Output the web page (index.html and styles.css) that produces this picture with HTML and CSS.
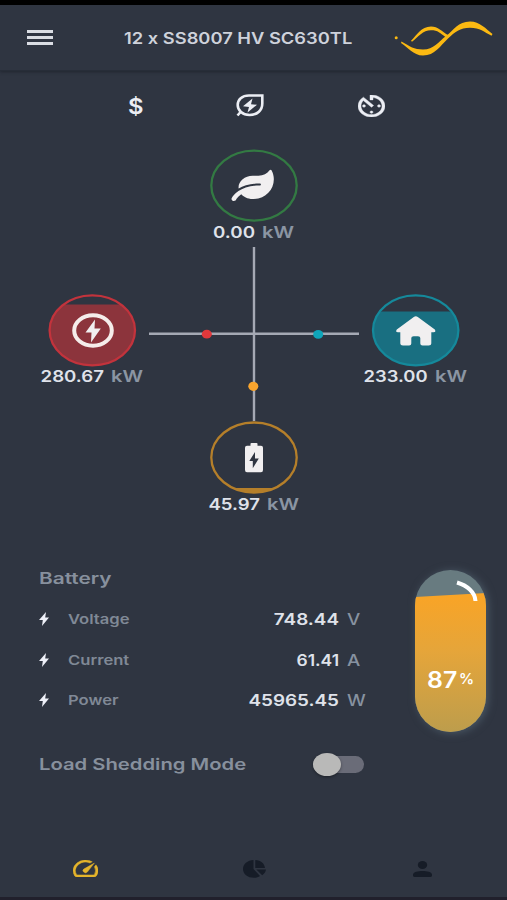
FILE: index.html
```html
<!DOCTYPE html>
<html lang="en">
<head>
  <meta charset="UTF-8">
  <meta name="viewport" content="width=device-width, initial-scale=1.0">
  <title>Inverter Dashboard</title>
  <link rel="stylesheet" href="styles.css">
</head>
<body>

  <!-- Header -->
  <header class="header">
    <button class="menu" aria-label="Menu"><span></span><span></span><span></span></button>
    <h1 class="title"><span>12 x SS8007 HV SC630TL</span></h1>
    <svg class="logo" viewBox="394 18 100 38">
      <circle cx="396.2" cy="36.8" r="1.5"/>
      <path d="M401.5 40.500C410 45.500 414 48.500 423 48.500C434 48.500 438 41 446 35C454 29 458 20.500 470 20.500C480 20.500 486 28 492.500 33L491.500 34.800C484 31 480 26.800 470 26.800C460 26.800 455 31 448 37.500C440 45 435 54.500 423 54.500C413 54.500 408 46 401 42Z"/>
      <path d="M411 39.700C417 34 421 25.500 431 25.500C438 25.500 442 30.500 448 34L446 36.500C440 32 438 29.300 431 29.300C423 29.300 418 36 412 40.800Z"/>
    </svg>
  </header>

  <!-- Tab icons -->
  <nav class="tabs">
    <svg class="tab-dollar" viewBox="0 0 17 24"><text x="1" y="19.600" textLength="15.500" lengthAdjust="spacingAndGlyphs">$</text></svg>
    <svg class="tab-eco" viewBox="0 0 28 23">
      <path class="line" d="M26.300 1.500H13C6 1.500 1.700 5.500 1.700 11C1.700 16.500 6.500 21 13.500 21C21.500 21 26.300 16 26.300 9.500ZM5 17.500L1.500 21.500"/>
      <path d="M16.500 4.500L7 12.300L13 13L11.500 18.500L21 10.800L15 10.200Z"/>
    </svg>
    <svg class="tab-timer" viewBox="3 3 18 18" preserveAspectRatio="none">
      <path d="M11 17c0 .55.45 1 1 1s1-.45 1-1-.45-1-1-1-1 .45-1 1zm0-14v4h2V5.080c3.390.49 6 3.390 6 6.920 0 3.870-3.130 7-7 7s-7-3.130-7-7c0-1.680.59-3.220 1.580-4.420L12 13l1.410-1.410-6.800-6.800v.02C4.420 6.450 3 9.050 3 12c0 4.970 4.020 9 9 9 4.970 0 9-4.030 9-9s-4.030-9-9-9h-1zm7 9c0-.55-.45-1-1-1s-1 .45-1 1 .45 1 1 1 1-.45 1-1zM6 12c0 .55.45 1 1 1s1-.45 1-1-.45-1-1-1-1 .45-1 1z"/>
    </svg>
  </nav>

  <!-- Power flow diagram -->
  <svg class="flow" viewBox="0 140 507 380">
    <defs>
      <clipPath id="grid-level"><rect x="40" y="304.500" width="110" height="70"/></clipPath>
      <clipPath id="home-level"><rect x="365" y="311.500" width="110" height="70"/></clipPath>
      <clipPath id="batt-level"><rect x="200" y="488" width="110" height="10"/></clipPath>
    </defs>

    <path class="wire" d="M254 247V421M149 333.800H359"/>
    <ellipse class="dot-red" cx="206.800" cy="334.200" rx="5" ry="4.400"/>
    <ellipse class="dot-teal" cx="318.200" cy="334.400" rx="5" ry="4.400"/>
    <ellipse class="dot-orange" cx="253.300" cy="386.300" rx="5" ry="4.600"/>

    <!-- Solar -->
    <ellipse class="ring green" cx="254" cy="185.600" rx="42.700" ry="35"/>
    <path class="icon" transform="translate(231.500 169.800) scale(.0735 .0610)" d="M546.200 9.700c-5.600-12.500-21.600-13-28.300-1.200C486.900 62.400 431.400 96 368 96h-80C182 96 96 182 96 288c0 7 .8 13.700 1.500 20.500C161.300 262.800 253.400 224 384 224c8.800 0 16 7.200 16 16s-7.200 16-16 16C132.600 256 26 410.100 2.400 468c-6.600 16.300 1.200 34.900 17.500 41.600 16.400 6.800 35-1.100 41.800-17.300 1.500-3.600 20.900-47.900 71.900-90.600 32.400 43.900 94 85.800 174.900 77.200C465.500 467.500 576 326.700 576 154.300c0-50.200-10.800-102.200-29.800-144.600z"/>
    <text class="num" x="213" y="237.800" textLength="42" lengthAdjust="spacingAndGlyphs">0.00</text>
    <text class="unit" x="262" y="237.800" textLength="32" lengthAdjust="spacingAndGlyphs">kW</text>

    <!-- Grid -->
    <ellipse class="fill-red" cx="92.300" cy="330.300" rx="42.700" ry="35" clip-path="url(#grid-level)"/>
    <ellipse class="ring red" cx="92.300" cy="330.300" rx="42.700" ry="35"/>
    <ellipse class="plug-ring" cx="93" cy="330.500" rx="18.800" ry="15.300"/>
    <path class="icon" d="M95 319.500L85.500 332.500H91.500L91 342.500L100.800 328.500H94.500Z"/>
    <text class="num" x="40.500" y="382.400" textLength="63.500" lengthAdjust="spacingAndGlyphs">280.67</text>
    <text class="unit" x="111" y="382.400" textLength="32" lengthAdjust="spacingAndGlyphs">kW</text>

    <!-- Home -->
    <ellipse class="fill-teal" cx="415.700" cy="330.300" rx="42.700" ry="35" clip-path="url(#home-level)"/>
    <ellipse class="ring teal" cx="415.700" cy="330.300" rx="42.700" ry="35"/>
    <path class="icon" d="M413.800 316.900Q415.800 315.400 417.800 316.900L434.800 329.500Q436.500 332.300 433.500 332.300H431.300V343.500Q431.300 345.600 428.700 345.600H422.500Q420.300 345.600 420.300 343.500V338Q420.300 336.200 418 336.200H413.600Q411.300 336.200 411.300 338V343.500Q411.300 345.600 409.100 345.600H402.900Q400.300 345.600 400.300 343.500V332.300H398Q395 332.300 396.800 329.500Z"/>
    <text class="num" x="363.500" y="382.400" textLength="64" lengthAdjust="spacingAndGlyphs">233.00</text>
    <text class="unit" x="435" y="382.400" textLength="32" lengthAdjust="spacingAndGlyphs">kW</text>

    <!-- Battery -->
    <ellipse class="fill-orange" cx="254" cy="457.500" rx="42.700" ry="35" clip-path="url(#batt-level)"/>
    <ellipse class="ring orange" cx="254" cy="457.500" rx="42.700" ry="35"/>
    <path class="icon" fill-rule="evenodd" d="M250.500 445.800V443.800Q250.500 443 251.500 443H256.500Q257.500 443 257.500 443.800V445.800H261Q263 445.800 263 447.800V470Q263 472.200 261 472.200H247Q245 472.200 245 470V447.800Q245 445.800 247 445.800ZM255 452L249.300 461H252.800V468.200L258.800 458.600H255Z"/>
    <text class="num" x="208.500" y="509.800" textLength="51.500" lengthAdjust="spacingAndGlyphs">45.97</text>
    <text class="unit" x="267" y="509.800" textLength="32" lengthAdjust="spacingAndGlyphs">kW</text>
  </svg>

  <!-- Battery details -->
  <section class="battery">
    <div class="details">
      <h2 class="heading"><span>Battery</span></h2>
      <div class="row">
        <svg class="bolt" viewBox="0 0 10 14"><path d="M7 0L0 8H3.800L3 14L10 5.500H6.200Z"/></svg>
        <span class="label">Voltage</span>
        <span class="value">748.44</span>
        <span class="suffix">V</span>
      </div>
      <div class="row">
        <svg class="bolt" viewBox="0 0 10 14"><path d="M7 0L0 8H3.800L3 14L10 5.500H6.200Z"/></svg>
        <span class="label">Current</span>
        <span class="value amps">61.41</span>
        <span class="suffix">A</span>
      </div>
      <div class="row">
        <svg class="bolt" viewBox="0 0 10 14"><path d="M7 0L0 8H3.800L3 14L10 5.500H6.200Z"/></svg>
        <span class="label">Power</span>
        <span class="value">45965.45</span>
        <span class="suffix">W</span>
      </div>
      <div class="mode">
        <h2 class="heading"><span>Load Shedding Mode</span></h2>
        <div class="switch"><div class="thumb"></div></div>
      </div>
    </div>

    <div class="tank">
      <div class="charge"></div>
      <svg class="shine" viewBox="0 0 24 24"><path d="M2 2.500C12 5.500 20 12 20.500 21"/></svg>
      <div class="percent"><span class="pct-num">87</span><span class="pct-sign">%</span></div>
    </div>
  </section>

  <!-- Bottom navigation -->
  <nav class="bottom">
    <svg class="nav-speed" viewBox="2 4 20 16" preserveAspectRatio="none">
      <path d="M20.380 8.570l-1.230 1.850a8 8 0 0 1-.22 7.580H5.070A8 8 0 0 1 15.580 6.850l1.850-1.230A10 10 0 0 0 3.350 19a2 2 0 0 0 1.720 1h13.850a2 2 0 0 0 1.740-1 10 10 0 0 0-.27-10.440zm-9.790 6.840a2 2 0 0 0 2.830 0l5.660-8.490-8.490 5.660a2 2 0 0 0 0 2.830z"/>
    </svg>
    <svg class="nav-pie" viewBox="0 0 23 18">
      <path d="M10.500 0V9L17 16C15.500 17.200 13.500 17.800 11 17.800C4.500 17.800 0 14 0 9C0 4 4.500 .3 10.500 0ZM12.300 0C18 .3 21.500 3.500 22 8H12.300ZM13.300 9.500H23C22.600 11.800 21.300 13.800 19.200 15.300Z"/>
    </svg>
    <svg class="nav-user" viewBox="0 0 19 16">
      <ellipse cx="9.500" cy="4" rx="4.700" ry="4"/>
      <path d="M0 14.500V13.500C0 11 5 10 9.500 10S19 11 19 13.500V14.500Q19 16 17 16H2Q0 16 0 14.500Z"/>
    </svg>
  </nav>

</body>
</html>
```

FILE: styles.css
```css
/* General */
* {
  box-sizing: border-box;
}

body {
  margin: 0;
  width: 507px;
  height: 900px;
  display: flex;
  flex-direction: column;
  overflow: hidden;
  background-color: #2f3541;
  border-top: 5px solid #000;
  border-bottom: 3px solid #21202c;
  font-family: Inter, "Liberation Sans", sans-serif;
  font-weight: 600;
  color: #dfe2ea;
}

svg {
  display: block;
  flex: none;
}

h1, h2 {
  margin: 0;
  font-weight: 600;
}

/* Header */
.header {
  height: 66px;
  flex: none;
  display: flex;
  align-items: center;
  padding: 0 13px 0 27px;
  border-bottom: 1px solid #272d38;
  box-shadow: 0 1px 3px #20252f;
}

.menu {
  width: 26px;
  padding: 0;
  border: none;
  background: none;
  display: flex;
  flex-direction: column;
  gap: 3.5px;
}

.menu span {
  height: 2.5px;
  background-color: #dadde3;
}

.title {
  width: 270px;
  margin-left: 71px;
  font-size: 16px;
  line-height: 20px;
  color: #ced2db;
  white-space: nowrap;
}

.title span,
.heading span {
  display: inline-block;
  transform: scaleX(1.145);
  transform-origin: left;
}

.logo {
  width: 100px;
  height: 38px;
  fill: #fbb912;
}

/* Tab icons */
.tabs {
  height: 69px;
  flex: none;
  display: flex;
  align-items: center;
  padding-left: 127px;
  fill: #eceef4;
}

.tab-dollar {
  width: 17px;
  height: 24px;
  font-size: 22px;
}

.tab-eco {
  width: 28px;
  height: 23px;
  margin-left: 92px;
}

.tab-eco .line {
  fill: none;
  stroke: #eceef4;
  stroke-width: 2.6;
}

.tab-timer {
  width: 27px;
  height: 22px;
  margin-left: 94px;
  stroke: #eceef4;
  stroke-width: .3;
}

/* Power flow diagram */
.flow {
  width: 507px;
  height: 380px;
  font-size: 16px;
}

.wire {
  stroke: #a5a9b4;
  stroke-width: 2.4;
}

.ring {
  fill: none;
  stroke-width: 2.3;
}

.green { stroke: #337a43; }
.red { stroke: #c2333c; }
.teal { stroke: #15899b; }
.orange { stroke: #b57f2a; }

.fill-red { fill: #8c343c; }
.fill-teal { fill: #196f81; }
.fill-orange { fill: #b57f2a; }

.dot-red { fill: #e2383b; }
.dot-teal { fill: #0fa6ba; }
.dot-orange { fill: #faa52e; }

.icon { fill: #f1eff0; }

.plug-ring {
  fill: none;
  stroke: #f5ecea;
  stroke-width: 4;
}

.num { fill: #dfe2ea; }
.unit { fill: #8b95a3; }

/* Battery details */
.battery {
  height: 290px;
  flex: none;
  display: flex;
  padding: 50px 0 0 39px;
}

.details {
  width: 376px;
}

.heading {
  font-size: 16px;
  line-height: 16px;
  color: #87909d;
  white-space: nowrap;
}

.heading span {
  transform: scaleX(1.3);
}

.details > .heading {
  margin-bottom: 13px;
}

.row {
  height: 40.4px;
  display: flex;
  align-items: center;
  white-space: nowrap;
}

.bolt {
  width: 10px;
  height: 14px;
  fill: #eef0f8;
}

.label {
  width: 90px;
  margin-left: 19px;
  font-size: 13.5px;
  color: #808996;
  transform: scaleX(1.23);
  transform-origin: left;
}

.value {
  width: 181px;
  font-size: 16px;
  text-align: right;
  transform: scaleX(1.18);
  transform-origin: right;
}

.value.amps {
  transform: scaleX(1.09);
}

.suffix {
  margin-left: 8px;
  font-size: 16px;
  font-weight: 500;
  color: #8792a0;
  transform: scaleX(1.17);
  transform-origin: left;
}

/* Load shedding switch */
.mode {
  height: 24px;
  margin-top: 32px;
  display: flex;
  align-items: center;
}

.mode .heading {
  width: 274px;
}

.mode .heading span {
  transform: scaleX(1.265);
}

.switch {
  width: 51px;
  height: 17px;
  border-radius: 9px;
  background-color: #6a6c78;
  display: flex;
  align-items: center;
}

.thumb {
  width: 28px;
  height: 23px;
  flex: none;
  border-radius: 50%;
  background-color: #b9b9b8;
  box-shadow: 0 1px 3px rgba(0, 0, 0, .4);
}

/* Battery tank */
.tank {
  position: relative;
  width: 71px;
  height: 162px;
  border-radius: 36px;
  overflow: hidden;
  background-color: #687b80;
  box-shadow: 2px 1px 8px #4b5966;
}

.charge {
  height: 100%;
  background: linear-gradient(#f9a426 15%, #e5a53a 50%, #bd9d4c);
  clip-path: polygon(0 27px, 100% 23px, 100% 100%, 0 100%);
}

.shine {
  position: absolute;
  top: 10px;
  left: 40px;
  width: 24px;
  height: 24px;
  fill: none;
  stroke: #fff;
  stroke-width: 4;
}

.percent {
  position: absolute;
  top: 96px;
  left: 12px;
  display: flex;
  line-height: 28px;
  color: #fff;
}

.pct-num {
  width: 32px;
  font-size: 23px;
  transform: scaleX(1.08);
  transform-origin: left;
}

.pct-sign {
  font-size: 15px;
  line-height: 25px;
}

/* Bottom navigation */
.bottom {
  height: 57px;
  flex: none;
  margin-top: auto;
  display: flex;
  align-items: center;
  padding-left: 73px;
  fill: #161c27;
}

.nav-speed {
  width: 25px;
  height: 17px;
  fill: #e5b42b;
  stroke: #e5b42b;
  stroke-width: .4;
}

.nav-pie {
  width: 23px;
  height: 18px;
  margin-left: 145px;
}

.nav-user {
  width: 19px;
  height: 16px;
  margin-left: 147px;
}
```
